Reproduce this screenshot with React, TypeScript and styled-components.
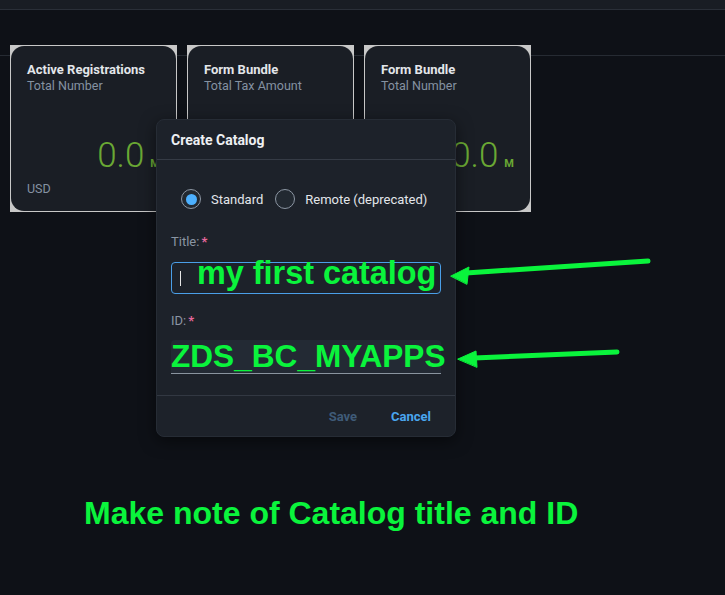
import React from "react";
import styled, { createGlobalStyle } from "styled-components";

const GREEN = "#0af43c";

const GlobalStyle = createGlobalStyle`
  html, body {
    margin: 0;
    padding: 0;
    background: #0e1117;
    font-family: Roboto, "Noto Sans", sans-serif;
  }
`;

const Page = styled.div`
  position: relative;
  width: 725px;
  height: 595px;
  overflow: hidden;
  background: #0e1117;
`;

const TopBar = styled.div`
  height: 9px;
  background: #191d24;
  border-bottom: 1px solid #2a2f38;
`;

const Main = styled.main`
  padding: 35px 0 0 10px;
  background: linear-gradient(
    to bottom,
    transparent 45px,
    #262b33 45px,
    #262b33 46px,
    transparent 46px
  );
  height: 300px;
`;

const TileRow = styled.div`
  display: flex;
  gap: 10px;
`;

const Tile = styled.div`
  width: 167px;
  height: 167px;
  box-sizing: border-box;
  padding: 1px;
  background: #c8c8c8;
`;

const Card = styled.div`
  height: 100%;
  box-sizing: border-box;
  display: flex;
  flex-direction: column;
  padding: 16px 16px 14px 16px;
  border-radius: 13px;
  background: #1a1e25;
`;

const TileTitle = styled.div`
  color: #e3e6ea;
  font-size: 13px;
  font-weight: 700;
  line-height: 16px;
`;

const TileSub = styled.div`
  color: #8592a2;
  font-size: 12.5px;
  line-height: 15px;
`;

const ValueRow = styled.div`
  margin-top: auto;
  display: flex;
  justify-content: flex-end;
  align-items: baseline;
  gap: 6px;
  color: #6aa834;
`;

const Value = styled.span`
  font-size: 35px;
  font-weight: 300;
  line-height: 40px;
`;

const Unit = styled.span`
  font-size: 11px;
  font-weight: 700;
`;

const TileFoot = styled.div`
  margin-top: 5px;
  height: 16px;
  color: #8592a2;
  font-size: 12.5px;
  line-height: 16px;
`;

const Dialog = styled.div`
  position: absolute;
  left: 156px;
  top: 119px;
  width: 300px;
  height: 318px;
  box-sizing: border-box;
  display: flex;
  flex-direction: column;
  background: #1d222a;
  border-radius: 8px;
  border: 1px solid #262c35;
  box-shadow: 0 4px 16px rgba(0, 0, 0, 0.5);
`;

const DialogHeader = styled.div`
  height: 39px;
  display: flex;
  align-items: center;
  padding-left: 14px;
  border-bottom: 1px solid #353b45;
  color: #eef0f3;
  font-size: 14px;
  font-weight: 700;
`;

const DialogBody = styled.div`
  flex: 1;
  padding: 28px 15px 0 14px;
`;

const RadioGroup = styled.div`
  display: flex;
  align-items: center;
  padding-left: 10px;
  height: 22px;
`;

const RadioItem = styled.label`
  display: flex;
  align-items: center;
  flex-shrink: 0;
  gap: 10px;
  margin-right: 12px;
  color: #e3e6ea;
  font-size: 13px;
  white-space: nowrap;
`;

const RadioCircle = styled.span<{ $checked?: boolean }>`
  width: 20px;
  height: 20px;
  flex-shrink: 0;
  box-sizing: border-box;
  border-radius: 50%;
  border: 1px solid #8c96a3;
  background: #222931;
  display: flex;
  align-items: center;
  justify-content: center;

  &::after {
    content: "";
    display: ${(p) => (p.$checked ? "block" : "none")};
    width: 11px;
    height: 11px;
    border-radius: 50%;
    background: #4db1ff;
  }
`;

const FieldLabel = styled.div<{ $top: number }>`
  margin-top: ${(p) => p.$top}px;
  color: #8a95a3;
  font-size: 13px;
  line-height: 16px;
`;

const Required = styled.span`
  color: #e5689c;
  font-weight: 700;
  margin-left: 2px;
`;

const TitleInput = styled.div`
  margin-top: 12px;
  width: 270px;
  height: 32px;
  box-sizing: border-box;
  border: 1px solid #4a9fe8;
  border-radius: 4px;
  display: flex;
  align-items: center;
  padding-left: 8px;
  overflow: visible;
  white-space: nowrap;
`;

const Caret = styled.span`
  width: 1px;
  height: 15px;
  background: #e6e6e6;
  margin-right: 16px;
`;

const IdInput = styled.div`
  margin-top: 11px;
  width: 270px;
  height: 34px;
  box-sizing: border-box;
  background: #232a34;
  border-bottom: 1px solid #8a949f;
  border-radius: 4px 4px 0 0;
  display: flex;
  align-items: center;
  white-space: nowrap;
  overflow: visible;
`;

const Marker = styled.span<{ $size: number; $lift?: number }>`
  font-family: "Liberation Sans", Arial, sans-serif;
  font-weight: 700;
  font-size: ${(p) => p.$size}px;
  color: ${GREEN};
  line-height: 1;
  margin-bottom: ${(p) => (p.$lift ?? 0) * 2}px;
`;

const DialogFooter = styled.div`
  height: 39px;
  border-top: 1px solid #323842;
  display: flex;
  align-items: center;
  justify-content: flex-end;
  gap: 34px;
  padding-right: 24px;
  padding-top: 1px;
`;

const FooterButton = styled.button<{ $disabled?: boolean }>`
  background: none;
  border: none;
  padding: 0;
  font-family: Roboto, "Noto Sans", sans-serif;
  font-size: 13px;
  font-weight: 700;
  color: ${(p) => (p.$disabled ? "#3f5b78" : "#4aa6ef")};
  cursor: pointer;
`;

const Arrows = styled.svg`
  position: absolute;
  left: 0;
  top: 0;
  pointer-events: none;
`;

const Note = styled.div`
  position: absolute;
  left: 84px;
  top: 495px;
  font-family: "Liberation Sans", Arial, sans-serif;
  font-weight: 700;
  font-size: 32px;
  color: ${GREEN};
  white-space: nowrap;
`;

const tiles = [
  { title: "Active Registrations", sub: "Total Number", foot: "USD" },
  { title: "Form Bundle", sub: "Total Tax Amount", foot: "" },
  { title: "Form Bundle", sub: "Total Number", foot: "" },
];

export default function App() {
  return (
    <>
      <GlobalStyle />
      <Page>
        <TopBar />
        <Main>
          <TileRow>
            {tiles.map((t, i) => (
              <Tile key={i}>
                <Card>
                  <TileTitle>{t.title}</TileTitle>
                  <TileSub>{t.sub}</TileSub>
                  <ValueRow>
                    <Value>0.0</Value>
                    <Unit>M</Unit>
                  </ValueRow>
                  <TileFoot>{t.foot}</TileFoot>
                </Card>
              </Tile>
            ))}
          </TileRow>
        </Main>

        <Dialog>
          <DialogHeader>Create Catalog</DialogHeader>
          <DialogBody>
            <RadioGroup>
              <RadioItem>
                <RadioCircle $checked />
                Standard
              </RadioItem>
              <RadioItem>
                <RadioCircle />
                Remote (deprecated)
              </RadioItem>
            </RadioGroup>
            <FieldLabel $top={24}>
              Title:<Required>*</Required>
            </FieldLabel>
            <TitleInput>
              <Caret />
              <Marker $size={32.4} $lift={5}>
                my first catalog
              </Marker>
            </TitleInput>
            <FieldLabel $top={19}>
              ID:<Required>*</Required>
            </FieldLabel>
            <IdInput>
              <Marker $size={31.6}>ZDS_BC_MYAPPS</Marker>
            </IdInput>
          </DialogBody>
          <DialogFooter>
            <FooterButton $disabled>Save</FooterButton>
            <FooterButton>Cancel</FooterButton>
          </DialogFooter>
        </Dialog>

        <Arrows width="725" height="595" viewBox="0 0 725 595">
          <g fill={GREEN} stroke={GREEN} strokeLinecap="round" strokeLinejoin="round">
            <line x1="648" y1="261" x2="466" y2="273" strokeWidth="5" />
            <polygon points="451,276 469,267 467,284" strokeWidth="1" />
            <line x1="617" y1="352" x2="474" y2="358" strokeWidth="5" />
            <polygon points="458,359 476,351 477,367" strokeWidth="1" />
          </g>
        </Arrows>

        <Note>Make note of Catalog title and ID</Note>
      </Page>
    </>
  );
}
